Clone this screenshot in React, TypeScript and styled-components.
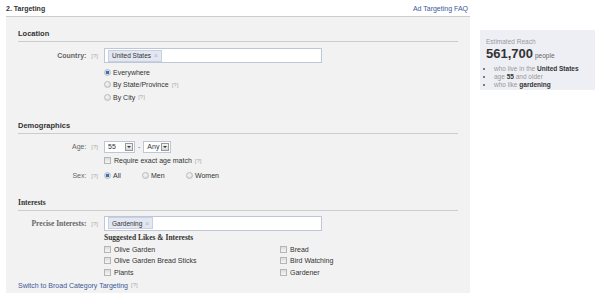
import React from 'react'
import styled, { createGlobalStyle } from 'styled-components'

const GlobalStyle = createGlobalStyle`
  body {
    margin: 0;
    background: #fff;
    font-family: 'Liberation Sans', Arial, sans-serif;
    font-size: 7px;
    color: #333;
  }
`

const LOCATIONS = [
  { label: 'Everywhere', checked: true, help: false },
  { label: 'By State/Province', checked: false, help: true },
  { label: 'By City', checked: false, help: true },
]

const SEXES = [
  { label: 'All', checked: true, width: 38 },
  { label: 'Men', checked: false, width: 44 },
  { label: 'Women', checked: false, width: 50 },
]

const SUGGESTED = [
  ['Olive Garden', 'Olive Garden Bread Sticks', 'Plants'],
  ['Bread', 'Bird Watching', 'Gardener'],
]

const Help = () => <HelpMark>[?]</HelpMark>

const App = () => {
  return (
    <Page>
      <GlobalStyle />
      <Main>
        <Header>
          <h1>2. Targeting</h1>
          <Link>Ad Targeting FAQ</Link>
        </Header>
        <Panel>
          <SectionTitle>Location</SectionTitle>
          <FormRow>
            <Label $bold>
              Country: <Help />
            </Label>
            <div>
              <TokenInput>
                <Token>
                  United States <span>×</span>
                </Token>
              </TokenInput>
            </div>
          </FormRow>
          <OptionList>
            {LOCATIONS.map((loc) => (
              <Option key={loc.label}>
                <Radio $checked={loc.checked} />
                {loc.label}
                {loc.help && <Help />}
              </Option>
            ))}
          </OptionList>

          <SectionTitle $top={17}>Demographics</SectionTitle>
          <FormRow $top={7}>
            <Label>
              Age: <Help />
            </Label>
            <AgeControls>
              <Select $width={31}>
                55
                <Arrow />
              </Select>
              <span>-</span>
              <Select $width={28}>
                Any
                <Arrow />
              </Select>
            </AgeControls>
          </FormRow>
          <OptionList $top={2}>
            <Option>
              <Check />
              Require exact age match <Help />
            </Option>
          </OptionList>
          <FormRow $top={2}>
            <Label>
              Sex: <Help />
            </Label>
            <SexRow>
              {SEXES.map((s) => (
                <Option key={s.label} style={{ width: s.width }}>
                  <Radio $checked={s.checked} />
                  {s.label}
                </Option>
              ))}
            </SexRow>
          </FormRow>

          <SectionTitle $top={16} $serif>
            Interests
          </SectionTitle>
          <FormRow $top={5}>
            <Label $bold $serif>
              Precise Interests: <Help />
            </Label>
            <div>
              <TokenInput>
                <Token>
                  Gardening <span>×</span>
                </Token>
              </TokenInput>
            </div>
          </FormRow>
          <Suggested>
            <h3>Suggested Likes &amp; Interests</h3>
            <SuggestGrid>
              {SUGGESTED.map((col, i) => (
                <div key={i}>
                  {col.map((item) => (
                    <Option key={item} $height={11.5}>
                      <Check />
                      {item}
                    </Option>
                  ))}
                </div>
              ))}
            </SuggestGrid>
          </Suggested>
          <Footer>
            <Link>Switch to Broad Category Targeting</Link> <Help />
          </Footer>
        </Panel>
      </Main>
      <Reach>
        <div className='caption'>Estimated Reach</div>
        <div className='count'>
          561,700<span>people</span>
        </div>
        <ul>
          <li>
            who live in the <b>United States</b>
          </li>
          <li>
            age <b>55</b> and older
          </li>
          <li>
            who like <b>gardening</b>
          </li>
        </ul>
      </Reach>
    </Page>
  )
}

const Page = styled.div`
  display: flex;
  align-items: flex-start;
  padding-left: 6px;
  height: 293px;
  overflow: hidden;
`

const Main = styled.div`
  width: 464px;
  display: flex;
  flex-direction: column;
  height: 293px;
`

const Header = styled.div`
  display: flex;
  flex-shrink: 0;
  justify-content: space-between;
  align-items: center;
  height: 17px;
  border-bottom: 1px solid #ccc;
  box-sizing: border-box;
  padding-right: 2px;
  h1 {
    margin: 0;
    font-size: 7px;
    font-weight: bold;
    color: #333;
  }
`

const Link = styled.a`
  color: #3b5998;
  font-size: 7px;
  cursor: pointer;
`

const HelpMark = styled.span`
  color: #aaa;
  font-weight: normal;
  font-family: 'Liberation Sans', Arial, sans-serif;
  font-size: 6px;
  margin-left: 3px;
`

const Panel = styled.div`
  flex: 1;
  min-height: 0;
  background: #f2f2f2;
  padding: 12px 12px 0 12px;
`

const SectionTitle = styled.h2<{ $top?: number; $serif?: boolean }>`
  margin: ${(p) => p.$top ?? 0}px 0 0 0;
  height: 12px;
  line-height: 10px;
  border-bottom: 1px solid #ccc;
  font-size: 7.5px;
  font-weight: bold;
  font-family: ${(p) => (p.$serif ? "'Liberation Serif', serif" : "'Liberation Sans', Arial, sans-serif")};
  color: #333;
`

const FormRow = styled.div<{ $top?: number }>`
  display: grid;
  grid-template-columns: 80px 1fr;
  column-gap: 6px;
  align-items: center;
  margin-top: ${(p) => p.$top ?? 6}px;
`

const Label = styled.div<{ $bold?: boolean; $serif?: boolean }>`
  text-align: right;
  color: #666;
  font-weight: ${(p) => (p.$bold ? 'bold' : 'normal')};
  font-family: ${(p) => (p.$serif ? "'Liberation Serif', serif" : "'Liberation Sans', Arial, sans-serif")};
  font-size: ${(p) => (p.$serif ? 7.5 : 7)}px;
`

const TokenInput = styled.div`
  width: 218px;
  height: 15px;
  box-sizing: border-box;
  background: #fff;
  border: 1px solid #bdc7d8;
  display: flex;
  align-items: center;
  padding-left: 3px;
`

const Token = styled.span`
  display: inline-flex;
  align-items: center;
  height: 10px;
  padding: 0 3px;
  background: #e2e7f1;
  border: 1px solid #c8d0e2;
  color: #333;
  font-size: 6.5px;
  span {
    color: #aab2c8;
    margin-left: 3px;
  }
`

const OptionList = styled.div<{ $top?: number }>`
  margin: ${(p) => p.$top ?? 3}px 0 0 86px;
`

const Option = styled.div<{ $height?: number }>`
  display: flex;
  align-items: center;
  height: ${(p) => p.$height ?? 12.5}px;
  color: #333;
  font-size: 7px;
  white-space: nowrap;
`

const Radio = styled.span<{ $checked?: boolean }>`
  width: 5px;
  height: 5px;
  border-radius: 50%;
  border: 1px solid #bbb;
  background: ${(p) =>
    p.$checked
      ? 'radial-gradient(circle, #3d6fb8 0 40%, #cfdcee 55%)'
      : 'radial-gradient(circle at 40% 35%, #f6f6f6, #d4d4d4)'};
  margin-right: 2px;
  flex-shrink: 0;
`

const Check = styled.span`
  width: 5px;
  height: 5px;
  border: 1px solid #b5b5b5;
  background: linear-gradient(#dcdcdc, #f6f6f6);
  margin-right: 3px;
  flex-shrink: 0;
`

const AgeControls = styled.div`
  display: flex;
  align-items: center;
  gap: 3px;
  color: #666;
`

const Select = styled.div<{ $width: number }>`
  width: ${(p) => p.$width}px;
  height: 12px;
  box-sizing: border-box;
  border: 1px solid #bdc7d8;
  background: #fff;
  display: flex;
  align-items: center;
  justify-content: space-between;
  padding: 0 1px 0 3px;
  color: #333;
`

const Arrow = styled.span`
  width: 8px;
  height: 8px;
  box-sizing: border-box;
  border: 1px solid #999;
  background: linear-gradient(#f4f4f4, #d8d8d8);
  position: relative;
  &::after {
    content: '';
    position: absolute;
    left: 1px;
    top: 2px;
    border-left: 2px solid transparent;
    border-right: 2px solid transparent;
    border-top: 2px solid #333;
  }
`

const SexRow = styled.div`
  display: flex;
`

const Suggested = styled.div`
  margin: 1px 0 0 86px;
  h3 {
    margin: 0;
    height: 12px;
    line-height: 12px;
    font-family: 'Liberation Serif', serif;
    font-size: 7.5px;
    font-weight: bold;
    color: #333;
  }
`

const SuggestGrid = styled.div`
  display: grid;
  grid-template-columns: 176px 1fr;
`

const Footer = styled.div`
  margin-top: 1px;
  height: 12px;
  display: flex;
  align-items: center;
`

const Reach = styled.div`
  margin: 30px 0 0 10px;
  width: 115px;
  height: 60px;
  box-sizing: border-box;
  background: #edeff4;
  padding: 8px 6px 0 6px;
  color: #999;
  .caption {
    font-size: 6.5px;
  }
  .count {
    margin-top: 2px;
    font-size: 13px;
    font-weight: bold;
    color: #333;
    line-height: 13px;
    span {
      font-size: 6.5px;
      font-weight: normal;
      color: #666;
      margin-left: 2px;
    }
  }
  ul {
    margin: 3px 0 0 0;
    padding: 0 0 0 8px;
    font-size: 6.5px;
    line-height: 8px;
    li::marker {
      color: #555;
    }
    b {
      color: #333;
    }
  }
`

export default App
